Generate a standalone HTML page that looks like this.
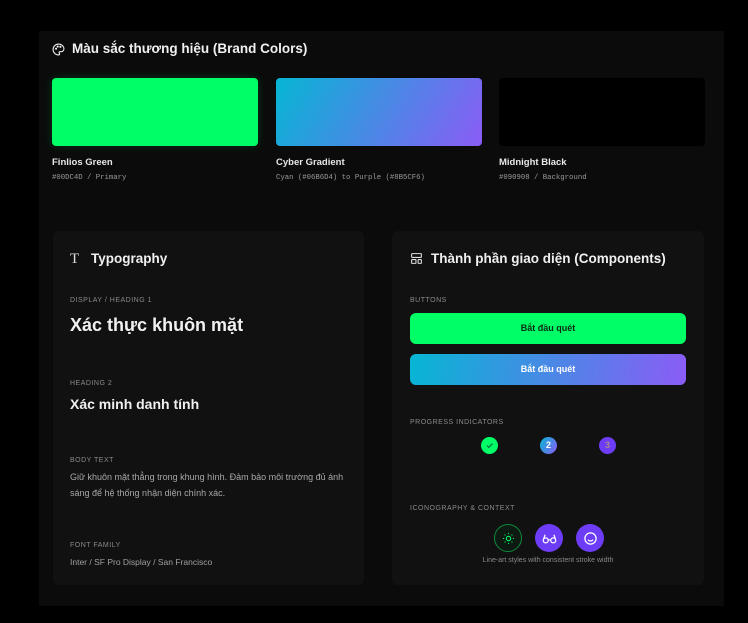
<!DOCTYPE html>
<html><head><meta charset="utf-8"><style>
*{margin:0;padding:0;box-sizing:border-box}
body{width:748px;height:623px;background:#000;font-family:"Liberation Sans",sans-serif;position:relative;overflow:hidden;color:#f0f0f0}
.a{position:absolute}
.main{left:39px;top:31px;width:685px;height:575px;background:#0b0b0b}
.card{background:#111;border-radius:6px;top:231px;height:354px}
.lab{font-size:7px;letter-spacing:.5px;color:#8a8a8a}
.mono{font-family:"Liberation Mono",monospace;font-size:7.3px;color:#9a9a9a}
.sw{top:78px;width:206px;height:68px;border-radius:4px}
.nm{font-size:9.5px;font-weight:bold;color:#e8e8e8;top:157px}
.btn{left:410px;width:276px;height:31px;border-radius:6px;font-size:9px;font-weight:bold;text-align:center;line-height:31px}
.dot{width:17px;height:17px;border-radius:50%;top:437px;font-size:9px;font-weight:bold;text-align:center;line-height:17px}
.ic{width:28px;height:28px;border-radius:50%;top:524px;display:flex;align-items:center;justify-content:center}
</style></head><body>
<div class="a main"></div>
<svg class="a" style="left:52px;top:43px" width="13" height="13" viewBox="0 0 24 24" fill="none" stroke="#eee" stroke-width="2"><path d="M12 2a10 10 0 0 0 0 20c1.5 0 2-1 2-2s-1-1.5-1-2.5 1-1.5 2-1.5h2a5 5 0 0 0 5-5C22 6 17.5 2 12 2z"/><circle cx="7.5" cy="10.5" r="1"/><circle cx="10.5" cy="6.5" r="1"/><circle cx="15.5" cy="7" r="1"/></svg>
<div class="a" style="left:72px;top:41px;font-size:13.5px;font-weight:bold">Màu sắc thương hiệu (Brand Colors)</div>
<div class="a sw" style="left:52px;background:#00ff66;box-shadow:0 0 10px rgba(0,255,102,.15)"></div>
<div class="a sw" style="left:276px;background:linear-gradient(120deg,#06b6d4,#8b5cf6)"></div>
<div class="a sw" style="left:499px;background:#000"></div>
<div class="a nm" style="left:52px">Finlios Green</div>
<div class="a nm" style="left:276px">Cyber Gradient</div>
<div class="a nm" style="left:499px">Midnight Black</div>
<div class="a mono" style="left:52px;top:174px">#00DC4D / Primary</div>
<div class="a mono" style="left:276px;top:174px">Cyan (#06B6D4) to Purple (#8B5CF6)</div>
<div class="a mono" style="left:499px;top:174px">#090908 / Background</div>

<div class="a card" style="left:53px;width:311px"></div>
<div class="a card" style="left:392px;width:312px"></div>

<div class="a" style="left:70px;top:251px;font-family:'Liberation Serif',serif;font-size:15px;color:#ddd">T</div>
<div class="a" style="left:91px;top:251px;font-size:13.5px;font-weight:bold">Typography</div>
<div class="a lab" style="left:70px;top:297px">DISPLAY / HEADING 1</div>
<div class="a" style="left:70px;top:315px;font-size:18px;font-weight:bold">Xác thực khuôn mặt</div>
<div class="a lab" style="left:70px;top:380px">HEADING 2</div>
<div class="a" style="left:70px;top:396px;font-size:14px;font-weight:bold">Xác minh danh tính</div>
<div class="a lab" style="left:70px;top:457px">BODY TEXT</div>
<div class="a" style="left:70px;top:470px;width:280px;font-size:9px;line-height:15.5px;color:#a8a8a8">Giữ khuôn mặt thẳng trong khung hình. Đảm bảo môi trường đủ ánh sáng để hệ thống nhận diện chính xác.</div>
<div class="a lab" style="left:70px;top:542px">FONT FAMILY</div>
<div class="a" style="left:70px;top:557px;font-size:8.5px;color:#a0a0a0">Inter / SF Pro Display / San Francisco</div>

<svg class="a" style="left:410px;top:252px" width="13" height="13" viewBox="0 0 24 24" fill="none" stroke="#ddd" stroke-width="2"><rect x="3" y="3" width="18" height="7" rx="1"/><rect x="3" y="14" width="8" height="7" rx="1"/><rect x="15" y="14" width="6" height="7" rx="1"/></svg>
<div class="a" style="left:431px;top:251px;font-size:13.5px;font-weight:bold">Thành phần giao diện (Components)</div>
<div class="a lab" style="left:410px;top:297px">BUTTONS</div>
<div class="a btn" style="top:313px;background:#00ff66;color:#0a2a14">Bắt đầu quét</div>
<div class="a btn" style="top:354px;background:linear-gradient(100deg,#06b6d4,#8b5cf6);color:#fff">Bắt đầu quét</div>
<div class="a lab" style="left:410px;top:419px">PROGRESS INDICATORS</div>
<div class="a dot" style="left:481px;background:#00ff66;color:#063"><svg width="9" height="9" viewBox="0 0 24 24" fill="none" stroke="#063" stroke-width="3" style="margin-top:4px"><path d="M5 12l5 5L20 7"/></svg></div>
<div class="a dot" style="left:540px;background:linear-gradient(120deg,#06b6d4,#8b5cf6);color:#fff">2</div>
<div class="a dot" style="left:599px;background:#6d3cf6;color:#a88">3</div>
<div class="a lab" style="left:410px;top:505px">ICONOGRAPHY &amp; CONTEXT</div>
<div class="a ic" style="left:494px;border:1.5px solid #0c8a3c;background:#0d1a12"><svg width="13" height="13" viewBox="0 0 24 24" fill="none" stroke="#00ff66" stroke-width="2"><circle cx="12" cy="12" r="4"/><path d="M12 2v2M12 20v2M2 12h2M20 12h2M4.9 4.9l1.4 1.4M17.7 17.7l1.4 1.4M4.9 19.1l1.4-1.4M17.7 6.3l1.4-1.4"/></svg></div>
<div class="a ic" style="left:535px;background:#6d3cf6"><svg width="15" height="15" viewBox="0 0 24 24" fill="none" stroke="#fff" stroke-width="2"><circle cx="6" cy="15" r="4"/><circle cx="18" cy="15" r="4"/><path d="M10 15c1-1 3-1 4 0M2.5 13L5 6M21.5 13L19 6"/></svg></div>
<div class="a ic" style="left:576px;background:#6d3cf6"><svg width="15" height="15" viewBox="0 0 24 24" fill="none" stroke="#fff" stroke-width="2"><circle cx="12" cy="12" r="9"/><path d="M8 14s1.5 2 4 2 4-2 4-2"/><path d="M9 9h.01M15 9h.01"/></svg></div>
<div class="a" style="left:410px;top:557px;width:276px;text-align:center;font-size:7px;color:#8a8a8a">Line-art styles with consistent stroke width</div>
</body></html>
